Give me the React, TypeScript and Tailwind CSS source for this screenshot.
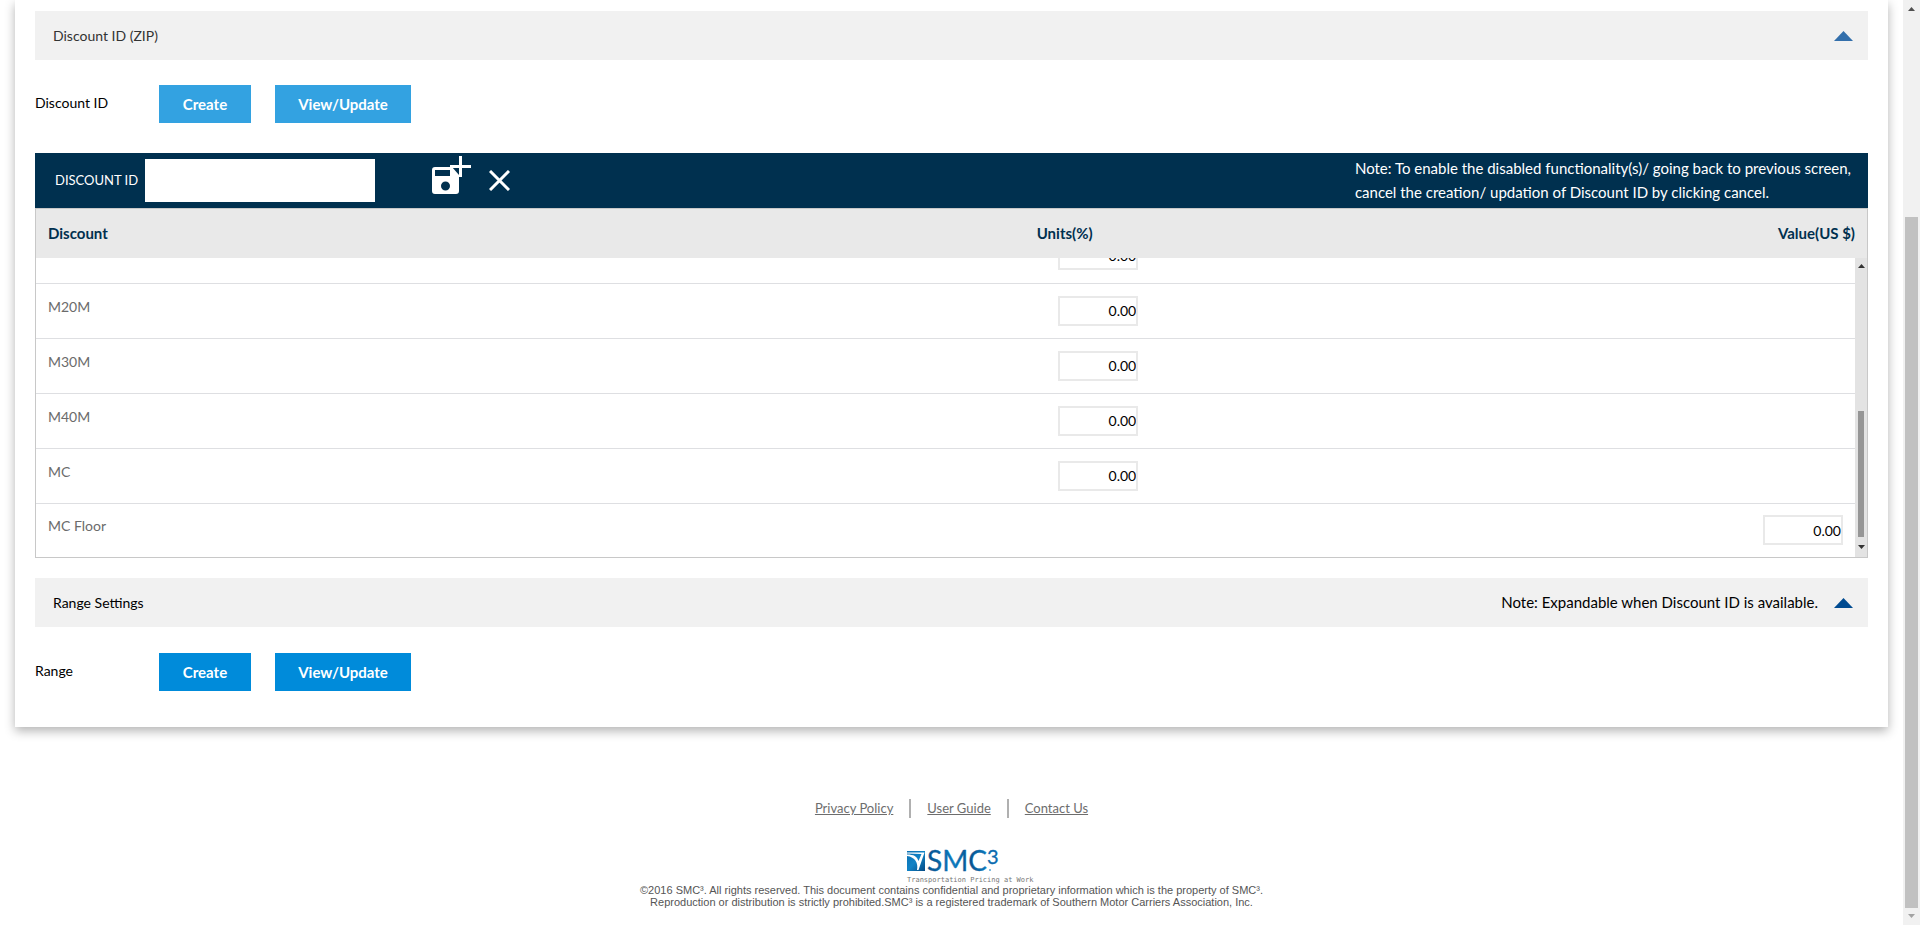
import { useState } from "react";

type Row = { name: string; column: "units" | "value" };

const rows: Row[] = [
  { name: "M10M", column: "units" },
  { name: "M20M", column: "units" },
  { name: "M30M", column: "units" },
  { name: "M40M", column: "units" },
  { name: "MC", column: "units" },
  { name: "MC Floor", column: "value" },
];

function AmountInput({ label }: { label: string }) {
  const [amount, setAmount] = useState("0.00");
  return (
    <input
      type="text"
      aria-label={label}
      value={amount}
      onChange={(e) => setAmount(e.target.value)}
      className="block h-[30px] w-20 border-2 border-[#e9e9e9] bg-white text-right text-sm text-black outline-none"
    />
  );
}

function SectionBar({ title, note, muted }: { title: string; note?: string; muted?: boolean }) {
  return (
    <div className={`flex h-[49px] items-center justify-between bg-[#f1f1f1] pr-[15px] pl-[18px] ${muted ? "text-[#333333]" : "text-black"}`}>
      <h2 className="text-sm">{title}</h2>
      <div className="flex items-center gap-4">
        {note && <span>{note}</span>}
        <button type="button" aria-label={`Collapse ${title}`}>
          <svg width="19" height="10" viewBox="0 0 19 10" className={muted ? "fill-[#336fab]" : "fill-[#004b91]"}>
            <path d="M9.5 0 19 10H0z" />
          </svg>
        </button>
      </div>
    </div>
  );
}

function ActionRow({ label, muted }: { label: string; muted?: boolean }) {
  const tone = muted ? "bg-[#33a2e1]" : "bg-[#008bda]";
  return (
    <div className="flex h-[38px] items-center font-bold text-white">
      <span className="w-[124px] pb-[2px] text-sm font-normal text-black">{label}</span>
      <button type="button" className={`h-full w-[92px] ${tone}`}>Create</button>
      <button type="button" className={`ml-6 h-full w-[136px] ${tone}`}>View/Update</button>
    </div>
  );
}

function Arrow({ down, className }: { down?: boolean; className: string }) {
  return (
    <svg width="7" height="4" viewBox="0 0 7 4" className={className}>
      <path d={down ? "M0 0h7L3.5 4z" : "M3.5 0 7 4H0z"} />
    </svg>
  );
}

function Logo() {
  return (
    <svg width="128" height="36" viewBox="0 0 128 36" role="img" aria-label="SMC³">
      <defs>
        <linearGradient id="tile" x1="0" y1="0" x2="1" y2="1">
          <stop offset="0" stopColor="#0b6fb0" />
          <stop offset="0.5" stopColor="#1183c6" />
          <stop offset="1" stopColor="#064a83" />
        </linearGradient>
        <linearGradient id="word" x1="0" y1="0" x2="1" y2="0">
          <stop offset="0" stopColor="#07518d" />
          <stop offset="0.45" stopColor="#0d7cbf" />
          <stop offset="0.7" stopColor="#07518d" />
          <stop offset="1" stopColor="#0d7cbf" />
        </linearGradient>
      </defs>
      <path d="M1 3h18v20H1z" fill="url(#tile)" />
      <path d="M1 4.500H18.500L12.500 22h-1.500C12.500 15 9 9 1 8L1 6.500C8 6.500 11 8.500 12.500 13L15.500 6 1 5.500z" fill="#fff" />
      <text x="21" y="23" fontFamily="Lato, sans-serif" fontSize="28" fill="url(#word)" stroke="url(#word)" strokeWidth="0.3">SMC</text>
      <text x="81" y="16" fontFamily="Lato, sans-serif" fontSize="20" fill="#0a6cb0" stroke="#0a6cb0" strokeWidth="0.3">3</text>
      <circle cx="84" cy="22" r="1" fill="#5aa7d6" />
      <text x="1" y="34" fontFamily="DejaVu Sans Mono, monospace" fontSize="7" fill="#777777">
        Transportation Pricing at Work
      </text>
    </svg>
  );
}

export default function App() {
  const [discountId, setDiscountId] = useState("");
  return (
    <div className="flex min-h-screen bg-white font-[Lato,'Liberation_Sans',sans-serif] text-[15px]">
      <div className="min-w-0 flex-1">
        <main className="mr-[15px] ml-[15px] flex flex-col bg-white px-5 pt-[11px] pb-9 shadow-[0_4px_10px_rgba(0,0,0,0.3)]">
          <SectionBar title="Discount ID (ZIP)" muted />
          <div className="mt-[25px]">
            <ActionRow label="Discount ID" muted />
          </div>

          <div className="mt-[30px] flex h-[55px] items-center bg-[#00304f] pl-5 text-white">
            <label htmlFor="discount-id" className="w-[90px] text-[13px] whitespace-nowrap">DISCOUNT ID</label>
            <input
              id="discount-id"
              type="text"
              value={discountId}
              onChange={(e) => setDiscountId(e.target.value)}
              className="h-[43px] w-[230px] bg-white px-2 text-black outline-none"
            />
            <button type="button" aria-label="Save" className="mb-[10px] ml-[57px]">
              <svg width="39" height="39" viewBox="0 0 39 39" fill="none">
                <path
                  fill="#fff"
                  fillRule="evenodd"
                  d="M3 11h17l7 8v16a3 3 0 0 1-3 3H3a3 3 0 0 1-3-3V14a3 3 0 0 1 3-3zM3 14v6h15v-6zM13.500 25.500a4.500 4.500 0 1 0 0 9 4.500 4.500 0 0 0 0-9z"
                />
                <path d="M28.500 0v21M18 10.500h21" stroke="#fff" strokeWidth="3" />
              </svg>
            </button>
            <button type="button" aria-label="Cancel" className="ml-[18px]">
              <svg width="21" height="21" viewBox="0 0 21 21" stroke="#fff" strokeWidth="3">
                <path d="M1 1l19 19M20 1 1 20" />
              </svg>
            </button>
            <p className="mr-[17px] mb-px ml-auto leading-6">
              Note: To enable the disabled functionality(s)/ going back to previous screen,
              <br />
              cancel the creation/ updation of Discount ID by clicking cancel.
            </p>
          </div>

          <div className="border border-[#c8c8c8]">
            <table className="w-full table-fixed border-collapse bg-[#e9e9e9] text-[#00304f]">
              <thead>
                <tr className="h-[49px]">
                  <th className="w-[54%] px-3 text-left">Discount</th>
                  <th className="w-[23%] px-3 text-left">Units(%)</th>
                  <th className="px-3 text-right">Value(US $)</th>
                </tr>
              </thead>
            </table>
            <div className="flex h-[299px]">
              <div className="flex min-w-0 flex-1 flex-col justify-end overflow-hidden">
                <table className="w-full table-fixed border-collapse">
                  <tbody>
                    {rows.map((row) => (
                      <tr key={row.name} className="h-[55px] border-b border-[#dedfe2] last:h-[54px] last:border-b-0">
                        <td className="w-[54%] px-3 pb-2 text-sm text-[#6b6b6b]">{row.name}</td>
                        <td className="w-[23%] pl-10">
                          {row.column === "units" && <AmountInput label={`${row.name} units`} />}
                        </td>
                        <td className="pr-3">
                          {row.column === "value" && (
                            <div className="flex justify-end">
                              <AmountInput label={`${row.name} value`} />
                            </div>
                          )}
                        </td>
                      </tr>
                    ))}
                  </tbody>
                </table>
              </div>
              <div className="flex w-3 flex-col items-center bg-[#e3e3e3] pt-[6px] pb-2">
                <Arrow className="fill-[#333333]" />
                <div className="mt-auto mb-2 h-[126px] w-[6px] bg-[#969696]" />
                <Arrow down className="fill-[#333333]" />
              </div>
            </div>
          </div>

          <div className="mt-5">
            <SectionBar title="Range Settings" note="Note: Expandable when Discount ID is available." />
          </div>
          <div className="mt-[26px]">
            <ActionRow label="Range" />
          </div>
        </main>

        <footer className="flex flex-col items-center pt-[72px] text-[#6d6d6d]">
          <nav className="flex items-center text-[13px] leading-[19px]">
            <a href="#privacy" className="pr-4 underline">Privacy Policy</a>
            <a href="#guide" className="border-x-2 border-[#b0b0b0] px-4 underline">User Guide</a>
            <a href="#contact" className="pl-4 underline">Contact Us</a>
          </nav>
          <div className="mt-[30px] pl-9">
            <Logo />
          </div>
          <p className="text-center font-['Liberation_Sans',sans-serif] text-[11px] leading-3 text-[#555555]">
            ©2016 SMC³. All rights reserved. This document contains confidential and proprietary information which is the property of SMC³.
            <br />
            Reproduction or distribution is strictly prohibited.SMC³ is a registered trademark of Southern Motor Carriers Association, Inc.
          </p>
        </footer>
      </div>

      <div className="flex w-[17px] shrink-0 flex-col items-center bg-[#f1f1f1] pt-[7px] pb-[7px]">
        <Arrow className="fill-[#505050]" />
        <div className="mt-auto mb-[6px] h-[691px] w-[13px] bg-[#c1c1c1]" />
        <Arrow down className="fill-[#a3a3a3]" />
      </div>
    </div>
  );
}
